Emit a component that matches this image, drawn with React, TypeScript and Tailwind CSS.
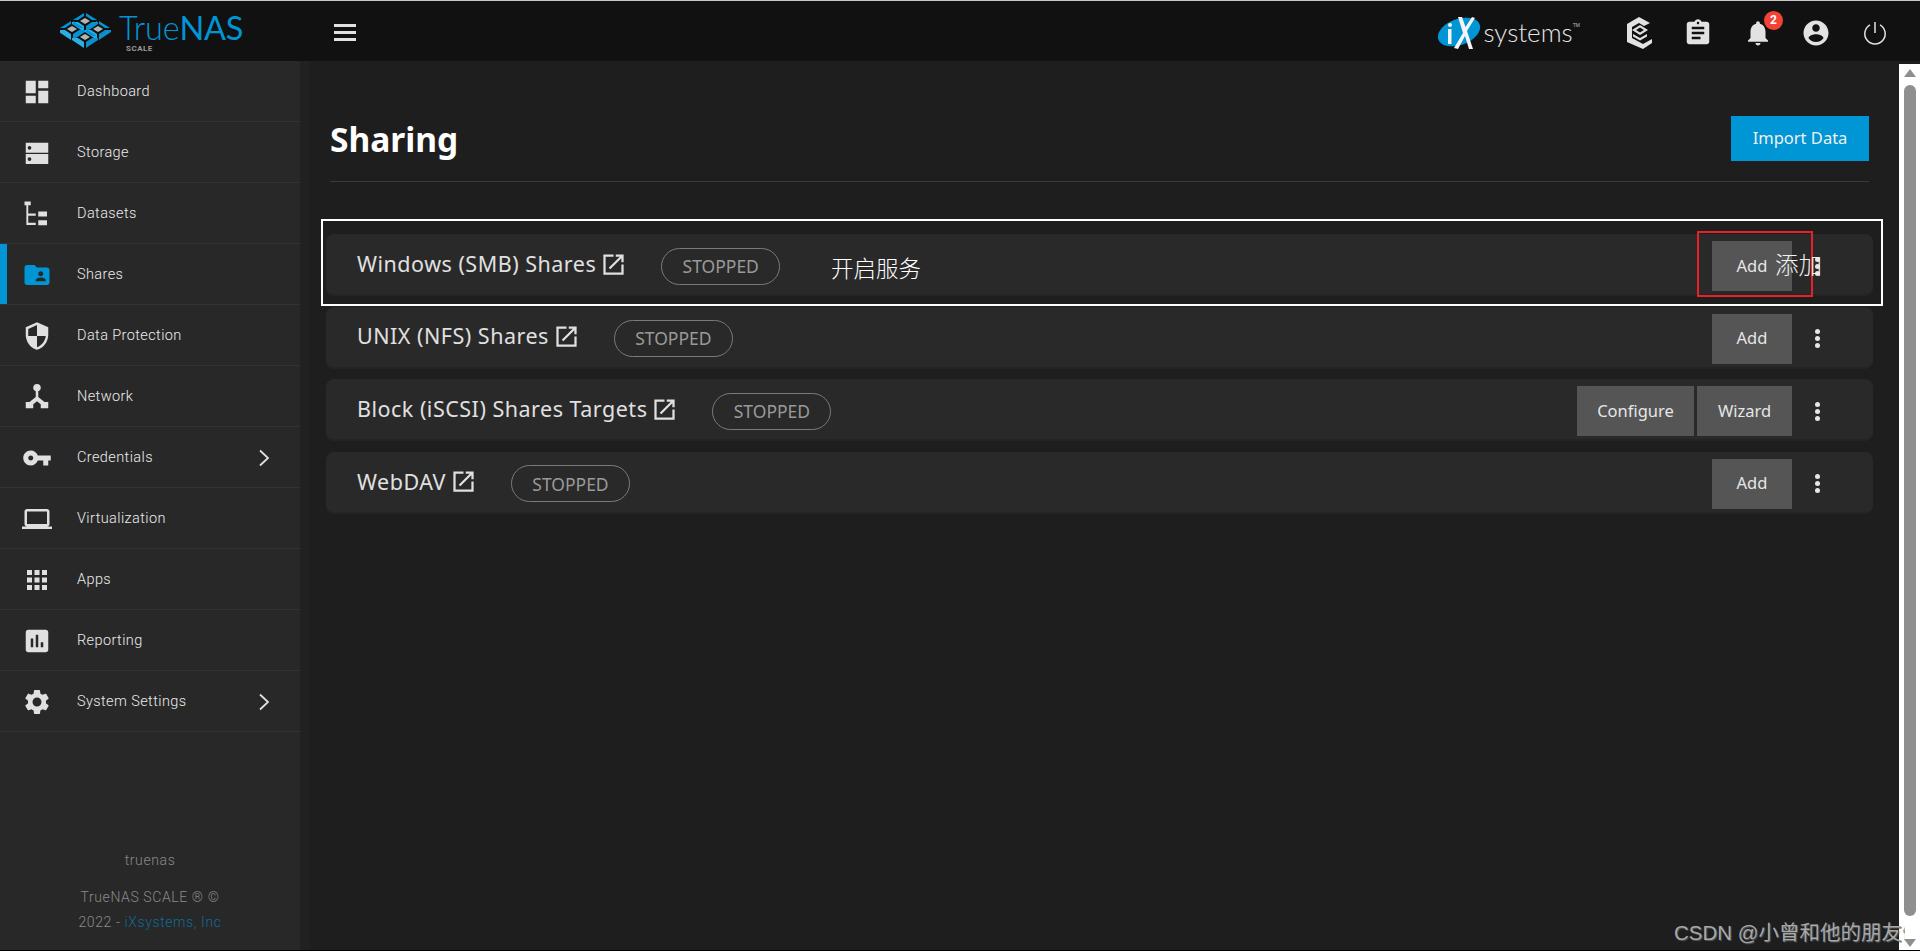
import type { ReactNode } from 'react';

const ICONS: Record<string, string> = {
  dashboard: 'M3 13h8V3H3v10zm0 8h8v-6H3v6zm10 0h8V11h-8v10zm0-18v6h8V3h-8z',
  storage: 'M3 3.800h18v8H3zM6 6.300a1.500 1.500 0 1 0 0 3 1.500 1.500 0 0 0 0-3zM3 12.800h18v8H3zM6 15.300a1.500 1.500 0 1 0 0 3 1.500 1.500 0 0 0 0-3z',
  datasets: 'M2 2h5v3H2zM3.500 5h1.500v14h6v1.800H3.500zM5 11.500h6v1.800H5zM13 10h7v4h-7zM13 17h7v4h-7z',
  shares: 'M20 6h-8l-2-2H4c-1.100 0-1.990.9-1.990 2L2 18c0 1.100.9 2 2 2h16c1.100 0 2-.9 2-2V8c0-1.100-.9-2-2-2zm-5 3c1.100 0 2 .9 2 2s-.9 2-2 2-2-.9-2-2 .9-2 2-2zm4 8h-8v-1c0-1.330 2.670-2 4-2s4 .67 4 2v1z',
  protection: 'M12 1L3 5v6c0 5.550 3.840 10.740 9 12 5.160-1.260 9-6.450 9-12V5l-9-4zm0 10.990h7c-.53 4.120-3.280 7.790-7 8.940V12H5V6.300l7-3.110v8.800z',
  network: 'M12 1.500a3 3 0 0 1 1 5.830V12l5 4h3v5h-6v-3.200l-3-2.500-3 2.500V21H3v-5h3l5-4V7.330a3 3 0 0 1 1-5.830z',
  key: 'M12.650 10C11.830 7.670 9.610 6 7 6c-3.310 0-6 2.690-6 6s2.690 6 6 6c2.610 0 4.830-1.670 5.650-4H17v4h4v-4h2v-4H12.650zM7 14c-1.100 0-2-.9-2-2s.9-2 2-2 2 .9 2 2-.9 2-2 2z',
  laptop: 'M20 18c1.100 0 1.990-.9 1.990-2L22 6c0-1.100-.9-2-2-2H4c-1.100 0-2 .9-2 2v10c0 1.100.9 2 2 2H0v2h24v-2h-4zM4 6h16v10H4V6z',
  apps: 'M4 8h4V4H4v4zm6 12h4v-4h-4v4zm-6 0h4v-4H4v4zm0-6h4v-4H4v4zm6 0h4v-4h-4v4zm6-10v4h4V4h-4zm-6 4h4V4h-4v4zm6 6h4v-4h-4v4zm0 6h4v-4h-4v4z',
  reporting: 'M19 3H5c-1.100 0-2 .9-2 2v14c0 1.100.9 2 2 2h14c1.100 0 2-.9 2-2V5c0-1.100-.9-2-2-2zM9 17H7v-7h2v7zm4 0h-2V7h2v10zm4 0h-2v-4h2v4z',
  settings: 'M19.140 12.940c.04-.3.06-.61.06-.94 0-.32-.02-.64-.07-.94l2.030-1.580c.18-.14.23-.41.12-.61l-1.920-3.320c-.12-.22-.37-.29-.59-.22l-2.390.96c-.5-.38-1.030-.7-1.620-.94l-.36-2.540c-.04-.24-.24-.41-.48-.41h-3.840c-.24 0-.43.17-.47.41l-.36 2.540c-.59.24-1.130.57-1.620.94l-2.390-.96c-.22-.08-.47 0-.59.22L2.740 8.870c-.12.21-.08.47.12.61l2.030 1.580c-.05.3-.09.63-.09.94s.02.64.07.94l-2.030 1.580c-.18.14-.23.41-.12.61l1.920 3.320c.12.22.37.29.59.22l2.390-.96c.5.38 1.030.7 1.620.94l.36 2.540c.05.24.24.41.48.41h3.840c.24 0 .44-.17.47-.41l.36-2.540c.59-.24 1.130-.56 1.620-.94l2.390.96c.22.08.47 0 .59-.22l1.920-3.320c.12-.22.07-.47-.12-.61l-2.010-1.580zM12 15.600c-1.980 0-3.600-1.620-3.600-3.600s1.620-3.600 3.600-3.600 3.600 1.620 3.600 3.600-1.620 3.600-3.600 3.600z',
  assignment: 'M19 3h-4.180C14.400 1.840 13.300 1 12 1c-1.300 0-2.400.84-2.820 2H5c-1.100 0-2 .9-2 2v14c0 1.100.9 2 2 2h14c1.100 0 2-.9 2-2V5c0-1.100-.9-2-2-2zm-7 0c.55 0 1 .45 1 1s-.45 1-1 1-1-.45-1-1 .45-1 1-1zm2 14H7v-2h7v2zm3-4H7v-2h10v2zm0-4H7V7h10v2z',
  bell: 'M12 22c1.100 0 2-.9 2-2h-4c0 1.100.89 2 2 2zm6-6v-5c0-3.070-1.640-5.640-4.500-6.320V4c0-.83-.67-1.500-1.500-1.500s-1.500.67-1.500 1.500v.68C7.630 5.360 6 7.920 6 11v5l-2 2v1h16v-1l-2-2z',
  account: 'M12 2C6.480 2 2 6.480 2 12s4.480 10 10 10 10-4.480 10-10S17.520 2 12 2zm0 3c1.660 0 3 1.340 3 3s-1.340 3-3 3-3-1.340-3-3 1.340-3 3-3zm0 14.200c-2.500 0-4.710-1.280-6-3.220.03-1.990 4-3.080 6-3.080 1.990 0 5.970 1.090 6 3.080-1.290 1.940-3.500 3.220-6 3.220z',
  external: 'M19 19H5V5h7V3H3v18h18v-9h-2zM14 3v2h3.590l-9.830 9.830 1.410 1.410L19 6.410V10h2V3h-7z',
};

function Icon({ name, className }: { name: string; className?: string }) {
  return (
    <svg viewBox="0 0 24 24" fill="currentColor" fillRule="evenodd" className={className}>
      <path d={ICONS[name]} />
    </svg>
  );
}

const NAV_ITEMS = [
  { label: 'Dashboard', icon: 'dashboard' },
  { label: 'Storage', icon: 'storage' },
  { label: 'Datasets', icon: 'datasets' },
  { label: 'Shares', icon: 'shares', active: true },
  { label: 'Data Protection', icon: 'protection' },
  { label: 'Network', icon: 'network' },
  { label: 'Credentials', icon: 'key', more: true },
  { label: 'Virtualization', icon: 'laptop' },
  { label: 'Apps', icon: 'apps' },
  { label: 'Reporting', icon: 'reporting' },
  { label: 'System Settings', icon: 'settings', more: true },
];

const SHARES = [
  { title: 'Windows (SMB) Shares', actions: [{ label: 'Add', width: 'w-[80px]' }] },
  { title: 'UNIX (NFS) Shares', actions: [{ label: 'Add', width: 'w-[80px]' }] },
  {
    title: 'Block (iSCSI) Shares Targets',
    actions: [
      { label: 'Configure', width: 'w-[117px]' },
      { label: 'Wizard', width: 'w-[95px]' },
    ],
  },
  { title: 'WebDAV', actions: [{ label: 'Add', width: 'w-[80px]' }] },
];

function LogoCell({ x, y }: { x: number; y: number }) {
  return (
    <g transform={`translate(${x} ${y})`}>
      <polygon points="-5,0 0,-3 5,0 0,3" fill="#b4b4b4" />
      <polygon points="-12,-1 -1,-8 -1,-5 -7,-1" fill="#0095d5" />
      <polygon points="12,-1 1,-8 1,-5 7,-1" fill="#0095d5" />
      <polygon points="-13,1 -7,1 -1,5 -1,11 -13,3" fill="#2bb0e6" />
      <polygon points="13,1 7,1 1,5 1,11 13,3" fill="#0c8fcb" />
    </g>
  );
}

function TrueNasLogo() {
  return (
    <div className="relative flex h-full w-[334px] shrink-0 items-start pl-[60px] pt-[11px]">
      <svg viewBox="0 0 52 36" className="h-[36px] w-[52px] shrink-0">
        <LogoCell x={25} y={9} />
        <LogoCell x={12} y={17} />
        <LogoCell x={38} y={17} />
        <LogoCell x={25} y={25} />
      </svg>
      <div className="ml-[7px] flex flex-col">
        <span className="font-['Lato',sans-serif] text-[32.500px] leading-[32px] tracking-[-0.2px] text-[#0095d5]">
          <span className="font-light">True</span>
          <span className="font-normal">NAS</span>
        </span>
        <span className="ml-[7px] font-['Roboto',sans-serif] text-[8px] font-bold leading-[10px] tracking-[0.5px] text-[#9a9a9a]">
          SCALE
        </span>
      </div>
    </div>
  );
}

function IxLogo() {
  return (
    <div className="mr-[46px] flex items-center">
      <div className="relative h-[34px] w-[44px]">
        <svg viewBox="0 0 44 34" className="h-full w-full">
          <ellipse cx="21" cy="16" rx="22" ry="13" transform="rotate(-20 21 16)" fill="#0095d5" />
          <path d="M20 1l4 0 3.500 10L34 1l3 1-8 13 6 18-4 0-4-13-7 13-4-1 9-15z" fill="#f4f4f4" />
          <rect x="10" y="13" width="3.500" height="15" fill="#f4f4f4" />
          <circle cx="12" cy="9" r="2" fill="#f4f4f4" />
        </svg>
      </div>
      <span className="ml-[1px] -mt-[1px] font-['Lato',sans-serif] text-[26px] font-light leading-none text-[#e4e4e4]">
        systems
      </span>
      <span className="mb-[14px] font-['Roboto',sans-serif] text-[5px] leading-none text-[#bbbbbb]">TM</span>
    </div>
  );
}

function CommandIcon() {
  return (
    <svg viewBox="0 0 28 32" className="h-[32px] w-[28px] text-[#e2e2e2]" fill="currentColor" fillRule="evenodd">
      <path d="M13 0l11 6-6 3-5-3-7 4v11l11 6 9-5v4l-9 6L1 25V7z" />
      <path d="M14 8l8 5-8 5-8-5zm0 2.500L10 13l4 2.500 4-2.500z" />
      <path d="M7 17l7 4 7-4v2.500l-7 4-7-4z" />
    </svg>
  );
}

function PowerIcon() {
  return (
    <svg viewBox="0 0 24 24" className="h-[24px] w-[24px]" fill="none" stroke="#e2e2e2" strokeWidth="1.500">
      <path d="M7 3.800a10.200 10.200 0 1 0 10 0" />
      <path d="M12 1v11" />
    </svg>
  );
}

function Header() {
  return (
    <header className="flex h-[61px] shrink-0 items-center border-t border-[#c8c8c8] bg-[#111111]">
      <TrueNasLogo />
      <div className="mt-[3px] flex w-[22px] flex-col gap-[4px]">
        <div className="h-[3px] bg-[#e2e2e2]" />
        <div className="h-[3px] bg-[#e2e2e2]" />
        <div className="h-[3px] bg-[#e2e2e2]" />
      </div>
      <div className="ml-auto flex items-center pr-[33px] pt-[3px]">
        <IxLogo />
        <CommandIcon />
        <Icon name="assignment" className="ml-[29px] h-[30px] w-[30px] text-[#e2e2e2]" />
        <div className="relative ml-[30px]">
          <Icon name="bell" className="h-[30px] w-[30px] text-[#e2e2e2]" />
          <span className="absolute -right-[10px] -top-[7px] flex h-[19px] w-[19px] items-center justify-center rounded-full bg-[#f44336] font-['Roboto',sans-serif] text-[12px] font-bold text-white">
            2
          </span>
        </div>
        <Icon name="account" className="ml-[28px] h-[30px] w-[30px] text-[#e2e2e2]" />
        <div className="ml-[32px]">
          <PowerIcon />
        </div>
      </div>
    </header>
  );
}

function NavRow({ label, icon, active, more }: { label: string; icon: string; active?: boolean; more?: boolean }) {
  return (
    <div className="relative flex h-[61px] shrink-0 items-center border-b border-[#333333] pl-[22px] pt-[2px] text-[#e0e0e0]">
      {active ? <div className="absolute bottom-0 left-0 top-0 w-[7px] bg-[#0095d5]" /> : null}
      <Icon
        name={icon}
        className={active ? 'h-[30px] w-[30px] shrink-0 text-[#0095d5]' : 'h-[30px] w-[30px] shrink-0 text-[#e0e0e0]'}
      />
      <span className="ml-[25px] font-['Roboto',sans-serif] text-[14.500px] font-light tracking-[0.4px] text-[#ececec]">{label}</span>
      {more ? (
        <svg viewBox="0 0 12 18" className="absolute right-[30px] top-[22px] h-[18px] w-[12px]" fill="none" stroke="#e0e0e0" strokeWidth="1.800">
          <path d="M2 1.500 10 9l-8 7.500" />
        </svg>
      ) : null}
    </div>
  );
}

function Sidebar() {
  return (
    <aside className="flex w-[300px] shrink-0 flex-col bg-[#282828]">
      {NAV_ITEMS.map((item) => (
        <NavRow key={item.label} {...item} />
      ))}
      <div className="mt-auto flex flex-col items-center pb-[15px] font-['Roboto',sans-serif] text-[14px] font-light leading-[25px] tracking-[0.6px] text-[#8a8a8a]">
        <span className="mb-[12px]">truenas</span>
        <span>TrueNAS SCALE ® ©</span>
        <span>
          2022 - <span className="text-[#0f6a96]">iXsystems, Inc</span>
        </span>
      </div>
    </aside>
  );
}

function ActionButton({ width, children }: { width: string; children: ReactNode }) {
  return (
    <button className={`flex h-[50px] items-center justify-center bg-[#555555] font-['Noto_Sans',sans-serif] text-[16.500px] text-[#e6e6e6] ${width}`}>
      {children}
    </button>
  );
}

function ShareRow({ title, actions }: { title: string; actions: { label: string; width: string }[] }) {
  return (
    <div className="flex h-[62px] items-center rounded-[8px] border-b-2 border-[#242424] bg-[#292929] pl-[31px] pr-[53px] pt-[4px]">
      <span className="-mt-[4px] flex items-center whitespace-nowrap font-['Noto_Sans',sans-serif] text-[21.500px] tracking-[0.5px] text-[#e0e0e0]">
        {title}
        <Icon name="external" className="ml-[4px] h-[27px] w-[27px]" />
      </span>
      <span className="ml-[34px] flex h-[37px] w-[119px] items-center justify-center rounded-full border border-[#7a7a7a] font-['Noto_Sans',sans-serif] text-[17.500px] text-[#999999]">
        STOPPED
      </span>
      <div className="ml-auto flex items-center gap-[3px]">
        {actions.map((action) => (
          <ActionButton key={action.label} width={action.width}>
            {action.label}
          </ActionButton>
        ))}
      </div>
      <div className="ml-[23px] flex flex-col gap-[2px]">
        <div className="h-[5px] w-[5px] rounded-full bg-[#e6e6e6]" />
        <div className="h-[5px] w-[5px] rounded-full bg-[#e6e6e6]" />
        <div className="h-[5px] w-[5px] rounded-full bg-[#e6e6e6]" />
      </div>
    </div>
  );
}

function Scrollbar() {
  return (
    <div className="mt-[3px] flex w-[21px] shrink-0 flex-col items-center bg-white pb-[3px] pt-[5px]">
      <div className="h-0 w-0 border-x-[6px] border-b-[8px] border-x-transparent border-b-[#8f8f8f]" />
      <div className="mt-[8px] w-[12px] flex-1 rounded-full bg-[#8f8f8f]" />
      <div className="mt-[23px] h-0 w-0 border-x-[6px] border-t-[8px] border-x-transparent border-t-[#8f8f8f]" />
    </div>
  );
}

export default function App() {
  return (
    <div className="relative flex h-[951px] w-[1920px] flex-col overflow-hidden border-b border-black bg-[#1e1e1e]">
      <Header />
      <div className="flex min-h-0 flex-1">
        <Sidebar />
        <div className="w-[10px] shrink-0 bg-[#212121]" />
        <main className="min-w-0 flex-1 pl-[16px] pr-[26px]">
          <div className="mx-[4px] flex h-[121px] items-end justify-between border-b border-[#3a3a3a] pb-[20px]">
            <h1 className="-mb-[1px] font-['Noto_Sans',sans-serif] text-[33.500px] font-bold leading-[46px] text-white">Sharing</h1>
            <button className="flex h-[45px] w-[138px] items-center justify-center bg-[#0095d5] font-['Noto_Sans',sans-serif] text-[16.500px] text-[#f0f0f0]">
              Import Data
            </button>
          </div>
          <div className="mt-[52px] flex flex-col gap-[10.600px]">
            {SHARES.map((share) => (
              <ShareRow key={share.title} {...share} />
            ))}
          </div>
        </main>
        <Scrollbar />
      </div>

      {/* screenshot annotations */}
      <div className="absolute left-[321px] top-[219px] h-[87px] w-[1562px] border-2 border-white" />
      <div className="absolute left-[1697px] top-[231px] h-[66px] w-[116px] border-2 border-[#e8202a]" />
      <span className="absolute left-[831px] top-[252px] font-['Noto_Sans_CJK_SC',sans-serif] text-[22.500px] font-light leading-[30px] text-white">开启服务</span>
      <span className="absolute left-[1775px] top-[249px] font-['Noto_Sans_CJK_SC',sans-serif] text-[23.500px] font-light leading-[30px] text-[#f0f0f0]">添加</span>
      <div className="absolute left-[1674px] top-[919px] w-[231px] overflow-hidden whitespace-nowrap font-['Liberation_Sans','Noto_Sans_CJK_SC',sans-serif] text-[20.500px] leading-[28px] text-[#a8a8a8] [text-shadow:1px_1px_1px_#555555]">
        CSDN @小曾和他的朋友们
      </div>
    </div>
  );
}
